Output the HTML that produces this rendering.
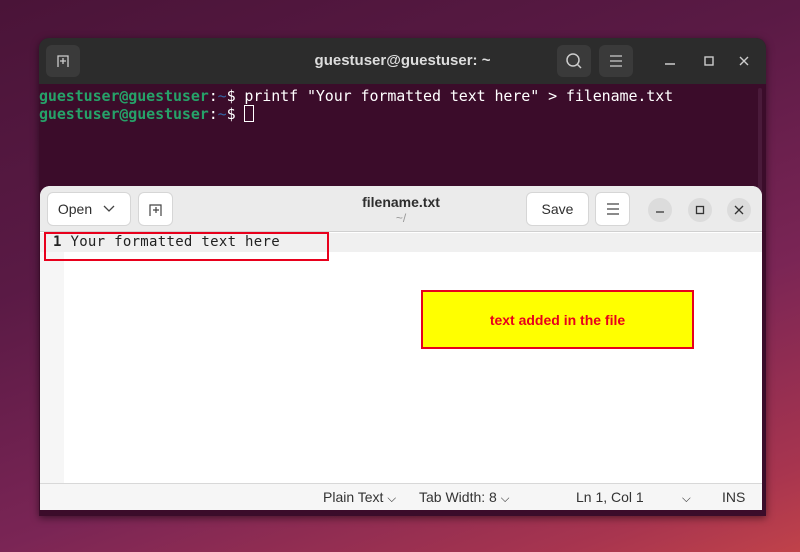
<!DOCTYPE html>
<html><head><style>
*{margin:0;padding:0;box-sizing:border-box}
body{width:800px;height:552px;overflow:hidden;position:relative;font-family:"Liberation Sans",sans-serif;
background:linear-gradient(160deg,#4a1438 0%,#5a1a45 35%,#7a2555 65%,#a8354f 90%,#c0424a 100%)}
.term{position:absolute;left:39px;top:38px;width:727px;height:478px;background:#3b0c2a;border-radius:10px 10px 0 0;overflow:hidden;box-shadow:0 2px 8px rgba(0,0,0,.5)}
.th{height:46px;background:#2c2c2c;position:relative;color:#cfcfcf}
.tb{position:absolute;top:7px;width:34px;height:32px;background:#3a3a3a;border-radius:6px}
.mono{font-family:"DejaVu Sans Mono","Liberation Mono",monospace;font-size:14px}
.tl{position:absolute;left:0;color:#fff;white-space:pre;font-size:15px;letter-spacing:-0.1px}
.g{color:#26a269;font-weight:bold}.b{color:#3465a4}
.ed{position:absolute;left:40px;top:186px;width:722px;height:324px;background:#fff;border-radius:10px 10px 0 0;overflow:hidden}
.eh{height:46px;background:#ebebeb;border-bottom:1px solid #d0d0d0;position:relative}
.btn{position:absolute;top:6px;height:34px;background:#fff;border:1px solid #d6d6d6;border-radius:6px;font-size:14px;color:#2e2e2e;display:flex;align-items:center;justify-content:center}
.cb{position:absolute;top:12px;width:24px;height:24px;border-radius:50%;background:#dcdcdc;display:flex;align-items:center;justify-content:center}
.sb{position:absolute;left:0;bottom:0;width:722px;height:27px;background:#f6f6f6;border-top:1px solid #d8d8d8;font-size:14px;color:#333}
.sb span{position:absolute;top:5px}
</style></head><body>
<div class="term">
 <div class="th">
  <div class="tb" style="left:7px"><svg width="34" height="32"><path d="M12 22V11h10v11M14 16h6M17 13v6" stroke="#ccc" stroke-width="1.3" fill="none"/></svg></div>
  <div style="position:absolute;left:0;width:727px;top:14px;text-align:center;font-weight:bold;font-size:15px;color:#ddd">guestuser@guestuser: ~</div>
  <div class="tb" style="left:518px"><svg width="34" height="32"><circle cx="16" cy="15" r="6" stroke="#ccc" stroke-width="1.5" fill="none"/><path d="M20 19l4 4" stroke="#ccc" stroke-width="1.5"/></svg></div>
  <div class="tb" style="left:560px"><svg width="34" height="32"><path d="M11 11h12M11 16h12M11 21h12" stroke="#ccc" stroke-width="1.3"/></svg></div>
  <svg style="position:absolute;left:620px;top:14px" width="100" height="20"><path d="M6 12h10" stroke="#ccc" stroke-width="1.4"/><rect x="46" y="5" width="8" height="8" stroke="#ccc" stroke-width="1.4" fill="none"/><path d="M81 5l8 8M89 5l-8 8" stroke="#ccc" stroke-width="1.4"/></svg>
 </div>
 <div class="tl mono" style="top:49px"><span class="g">guestuser@guestuser</span>:<span class="b">~</span>$ printf "Your formatted text here" &gt; filename.txt</div>
 <div class="tl mono" style="top:67px"><span class="g">guestuser@guestuser</span>:<span class="b">~</span>$ <span style="display:inline-block;width:10px;height:17px;border:1px solid #fff;vertical-align:-3px"></span></div>
 <div style="position:absolute;right:4px;top:50px;width:4px;height:420px;background:#4a1a3a;border-radius:2px"></div>
</div>
<div class="ed">
 <div class="eh">
  <div class="btn" style="left:7px;width:84px">Open <svg width="22" height="12" style="margin-left:6px"><path d="M6 3l5 5 5-5" stroke="#444" stroke-width="1.3" fill="none"/></svg></div>
  <div class="btn" style="left:98px;width:35px"><svg width="20" height="20"><path d="M4 17V6h11v11M7 11h6M10 8v6" stroke="#444" stroke-width="1.2" fill="none"/></svg></div>
  <div style="position:absolute;left:0;width:722px;top:8px;text-align:center;font-weight:bold;font-size:14px;color:#2e2e2e">filename.txt</div>
  <div style="position:absolute;left:0;width:722px;top:25px;text-align:center;font-size:12px;color:#999">~/</div>
  <div class="btn" style="left:486px;width:63px">Save</div>
  <div class="btn" style="left:555px;width:35px"><svg width="16" height="14"><path d="M2 2h12M2 7h12M2 12h12" stroke="#444" stroke-width="1.2"/></svg></div>
  <div class="cb" style="left:608px"><svg width="12" height="12"><path d="M2 8h8" stroke="#333" stroke-width="1.3"/></svg></div>
  <div class="cb" style="left:648px"><svg width="12" height="12"><rect x="2.5" y="2.5" width="7" height="7" stroke="#333" stroke-width="1.3" fill="none"/></svg></div>
  <div class="cb" style="left:687px"><svg width="12" height="12"><path d="M2 2l8 8M10 2l-8 8" stroke="#333" stroke-width="1.3"/></svg></div>
 </div>
 <div style="position:absolute;left:0;top:47px;width:24px;height:250px;background:#f6f6f6"></div>
 <div style="position:absolute;left:0;top:47px;width:722px;height:19px;background:#f0f0f0"></div>
 <div class="mono" style="position:absolute;left:13px;top:48px;color:#222;white-space:pre;font-size:14px;letter-spacing:0.3px"><b>1</b> Your formatted text here</div>
 <div class="sb">
  <span style="left:283px">Plain Text <small>⌵</small></span>
  <span style="left:379px">Tab Width: 8 <small>⌵</small></span>
  <span style="left:536px">Ln 1, Col 1</span>
  <span style="left:642px"><small>⌵</small></span>
  <span style="left:682px">INS</span>
 </div>
</div>
<div style="position:absolute;left:44px;top:232px;width:285px;height:29px;border:2px solid #e8001c"></div>
<div style="position:absolute;left:421px;top:290px;width:273px;height:59px;border:2px solid #e8001c;background:#ffff00;color:#e8001c;font-weight:bold;font-size:14px;display:flex;align-items:center;justify-content:center">text added in the file</div>
</body></html>
